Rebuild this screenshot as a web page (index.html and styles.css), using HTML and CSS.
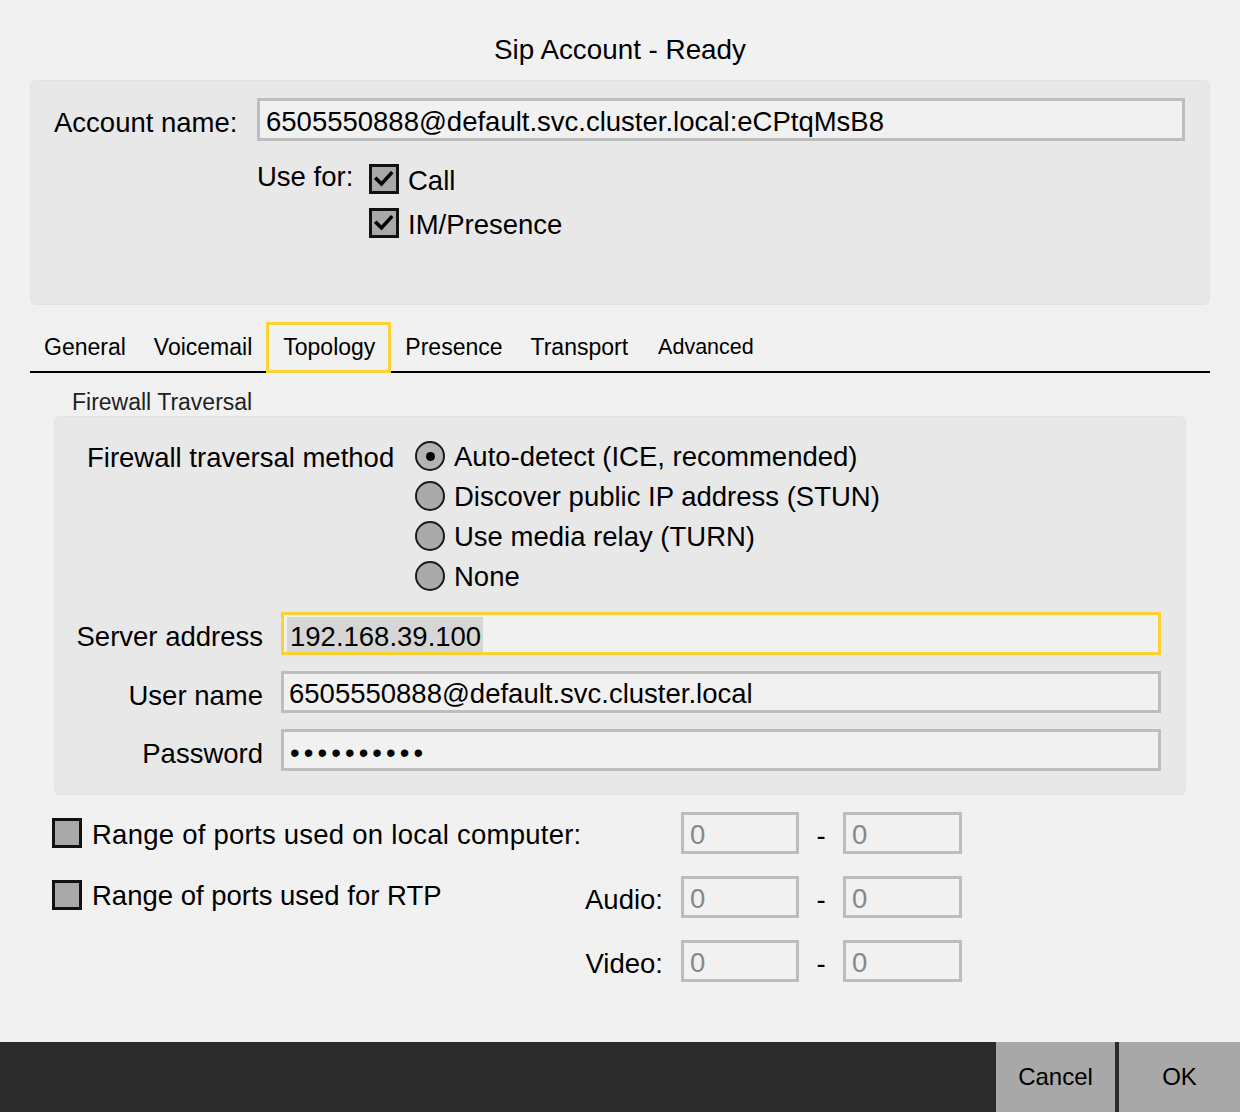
FILE: index.html
```html
<!DOCTYPE html>
<html>
<head>
<meta charset="utf-8">
<title>Sip Account</title>
<link rel="stylesheet" href="styles.css">
</head>
<body>
<div class="dialog">
  <div class="title">Sip Account - Ready</div>

  <div class="account-panel">
    <div class="account-row">
      <span class="account-label">Account name:</span>
      <div class="field account-field">6505550888@default.svc.cluster.local:eCPtqMsB8</div>
    </div>
    <div class="usefor-row">
      <span class="usefor-label">Use for:</span>
      <div class="check-list">
        <div class="check-item">
          <span class="checkbox"><svg viewBox="0 0 24 24" width="24" height="24"><polyline points="4.5,12 9.5,17 19,6.5" fill="none" stroke="#000" stroke-width="3.6" stroke-linecap="square" stroke-linejoin="miter"/></svg></span>
          <span class="check-text">Call</span>
        </div>
        <div class="check-item">
          <span class="checkbox"><svg viewBox="0 0 24 24" width="24" height="24"><polyline points="4.5,12 9.5,17 19,6.5" fill="none" stroke="#000" stroke-width="3.6" stroke-linecap="square" stroke-linejoin="miter"/></svg></span>
          <span class="check-text">IM/Presence</span>
        </div>
      </div>
    </div>
  </div>

  <div class="tabs">
    <div class="tab">General</div>
    <div class="tab">Voicemail</div>
    <div class="tab active">Topology</div>
    <div class="tab">Presence</div>
    <div class="tab">Transport</div>
    <div class="tab tab-small">Advanced</div>
  </div>

  <div class="group-title">Firewall Traversal</div>

  <div class="group-panel">
    <div class="method-row">
      <div class="method-label">Firewall traversal method</div>
      <div class="radio-list">
        <div class="radio-item"><span class="radio selected"><span class="dot"></span></span><span>Auto-detect (ICE, recommended)</span></div>
        <div class="radio-item"><span class="radio"></span><span>Discover public IP address (STUN)</span></div>
        <div class="radio-item"><span class="radio"></span><span>Use media relay (TURN)</span></div>
        <div class="radio-item"><span class="radio"></span><span>None</span></div>
      </div>
    </div>
    <div class="server-grid">
      <span class="form-label">Server address</span>
      <div class="field focused"><span class="selection">192.168.39.100</span></div>
      <span class="form-label">User name</span>
      <div class="field">6505550888@default.svc.cluster.local</div>
      <span class="form-label">Password</span>
      <div class="field password">••••••••••</div>
    </div>
  </div>

  <div class="ports">
    <div class="port-check span2">
      <span class="checkbox"></span>
      <span class="check-text wide">Range of ports used on local computer:</span>
    </div>
    <div class="field port-field">0</div>
    <div class="dash">-</div>
    <div class="field port-field">0</div>

    <div class="port-check top">
      <span class="checkbox"></span>
      <span class="check-text">Range of ports used for RTP</span>
    </div>
    <span class="port-label">Audio:</span>
    <div class="field port-field">0</div>
    <div class="dash">-</div>
    <div class="field port-field">0</div>

    <span class="port-spacer"></span>
    <span class="port-label">Video:</span>
    <div class="field port-field">0</div>
    <div class="dash">-</div>
    <div class="field port-field">0</div>
  </div>
</div>

<div class="footer">
  <button class="btn btn-cancel">Cancel</button>
  <button class="btn btn-ok">OK</button>
</div>
</body>
</html>
```

FILE: styles.css
```css
* {
  box-sizing: border-box;
}

html, body {
  margin: 0;
  padding: 0;
}

body {
  width: 1240px;
  height: 1112px;
  overflow: hidden;
  background: #f1f1f1;
  font-family: "Liberation Sans", Arial, Helvetica, sans-serif;
  font-size: 27.5px;
  color: #000;
}

.dialog {
  height: 1042px;
  padding: 0 30px;
}

.title {
  height: 80px;
  padding-top: 34px;
  line-height: 32px;
  font-size: 27.8px;
  text-align: center;
}

/* ---------- account panel ---------- */
.account-panel {
  height: 225px;
  background: #e8e8e8;
  border: 1px solid #e2e2e2;
  border-radius: 6px;
  padding: 17px 24px 0 23px;
}

.account-row {
  display: flex;
  align-items: center;
}

.account-label {
  width: 203px;
  flex: none;
  line-height: 32px;
  padding-top: 6px;
}

.field {
  height: 42px;
  border: 3px solid #bdbdbd;
  background: #f1f1f1;
  line-height: 32px;
  padding: 4px 5px 0;
  white-space: nowrap;
  overflow: hidden;
}

.account-field {
  flex: 1;
  height: 43px;
  padding-left: 6px;
  padding-top: 5px;
}

.usefor-row {
  display: flex;
  margin-left: 203px;
  margin-top: 23px;
}

.usefor-label {
  width: 112px;
  flex: none;
  line-height: 26px;
  padding-top: 0;
}

.check-list {
  display: flex;
  flex-direction: column;
  gap: 14px;
}

.check-item {
  display: flex;
  align-items: center;
  gap: 9px;
  height: 30px;
}

.check-text {
  line-height: 30px;
  padding-top: 3px;
}

.check-text.wide {
  letter-spacing: 0.25px;
}

.checkbox {
  width: 30px;
  height: 30px;
  flex: none;
  border: 3px solid #111;
  background: #a9a9a9;
  display: flex;
}

.checkbox svg {
  display: block;
}

/* ---------- tabs ---------- */
.tabs {
  display: flex;
  margin-top: 17px;
  border-bottom: 2px solid #000;
  height: 51px;
}

.tab {
  height: 51px;
  padding: 0 11px;
  border: 3px solid transparent;
  font-size: 23px;
  line-height: 44px;
  position: relative;
}

.tab.active {
  border-color: #fcd232;
  padding: 0 13px 0 14px;
}

.tab-small {
  font-size: 21.5px;
  margin-left: 2px;
}

.group-title {
  font-size: 23px;
  color: #222;
  line-height: 26px;
  margin-top: 16px;
  margin-left: 42px;
  margin-bottom: 1px;
}

/* ---------- group panel ---------- */
.group-panel {
  margin: 0 24px;
  background: #e8e8e8;
  border: 1px solid #e2e2e2;
  border-radius: 6px;
  padding: 19px 24px 23px 0;
}

.method-row {
  display: flex;
  padding-left: 32px;
}

.method-label {
  width: 328px;
  flex: none;
  line-height: 40px;
  padding-top: 2px;
}

.radio-list {
  display: flex;
  flex-direction: column;
}

.radio-item {
  height: 40px;
  display: flex;
  align-items: center;
  gap: 9px;
}

.radio-item span:last-child {
  padding-top: 2px;
}

.radio {
  width: 30px;
  height: 30px;
  flex: none;
  border-radius: 50%;
  border: 2px solid #1a1a1a;
  background: #aaa;
  display: flex;
  align-items: center;
  justify-content: center;
}

.radio.selected {
  background: #b3b3b3;
}

.dot {
  width: 9px;
  height: 9px;
  border-radius: 50%;
  background: #000;
}

.server-grid {
  display: grid;
  grid-template-columns: 208px 1fr;
  column-gap: 18px;
  row-gap: 16px;
  margin-top: 16px;
  align-items: center;
}

.form-label {
  text-align: right;
  line-height: 32px;
  padding-top: 7px;
  padding-right: 0;
}

.field.focused {
  border-color: #fcd232;
  height: 43px;
  padding-left: 3px;
  padding-top: 2px;
}

.selection {
  background: #d6d6d6;
  padding: 3px 0 0 3px;
  width: 196px;
  display: inline-block;
  line-height: 33px;
}

.password {
  letter-spacing: 4.1px;
  padding-left: 6px;
  padding-top: 5px;
}

/* ---------- ports ---------- */
.ports {
  display: grid;
  grid-template-columns: 480px 149px 118px 44px 119px;
  grid-auto-rows: 42px;
  row-gap: 22px;
  margin-top: 17px;
  padding-left: 22px;
  align-items: center;
}

.port-check {
  display: flex;
  align-items: center;
  gap: 10px;
  white-space: nowrap;
}

.port-check.span2 {
  grid-column: span 2;
}

.port-check.top {
  align-self: start;
  margin-top: 2px;
}

.port-label {
  text-align: right;
  padding-right: 18px;
  line-height: 32px;
  padding-top: 6px;
}

.port-field {
  color: #888;
  padding-left: 6px;
  padding-top: 4px;
}

.dash {
  text-align: center;
  line-height: 32px;
  padding-top: 6px;
}

/* ---------- footer ---------- */
.footer {
  height: 70px;
  background: #2b2b2b;
  display: flex;
  justify-content: flex-end;
  gap: 4px;
}

.btn {
  height: 70px;
  border: none;
  margin: 0;
  padding: 0;
  background: #a8a8a8;
  font-family: "Liberation Sans", Arial, Helvetica, sans-serif;
  font-size: 24px;
  color: #000;
}

.btn-cancel {
  width: 119px;
}

.btn-ok {
  width: 121px;
}
```
